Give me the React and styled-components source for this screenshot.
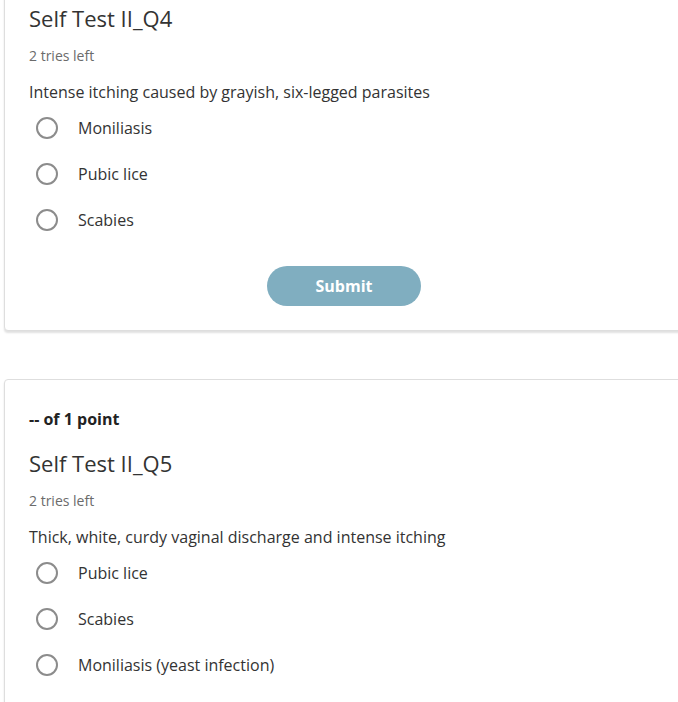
import styled, { createGlobalStyle } from "styled-components";

const GlobalStyle = createGlobalStyle`
  html, body {
    margin: 0;
    padding: 0;
    background: #ffffff;
    overflow: hidden;
  }
  body {
    font-family: "Open Sans", "Noto Sans", sans-serif;
    color: #333333;
  }
`;

const questions = [
  {
    id: 4,
    prompt: "Intense itching caused by grayish, six-legged parasites",
    options: ["Moniliasis", "Pubic lice", "Scabies"],
  },
  {
    id: 5,
    prompt: "Thick, white, curdy vaginal discharge and intense itching",
    options: ["Pubic lice", "Scabies", "Moniliasis (yeast infection)"],
  },
];

export default function App() {
  return (
    <>
      <GlobalStyle />
      <Page>
        {questions.map((q) => (
          <Card key={q.id}>
            <Points>-- of 1 point</Points>
            <Title>Self Test II_Q{q.id}</Title>
            <Tries>2 tries left</Tries>
            <Prompt>{q.prompt}</Prompt>
            <Options>
              {q.options.map((opt) => (
                <Option key={opt}>
                  <Radio type="radio" name={"q" + q.id} />
                  <span>{opt}</span>
                </Option>
              ))}
            </Options>
            <Actions>
              <SubmitButton type="button">Submit</SubmitButton>
            </Actions>
          </Card>
        ))}
      </Page>
    </>
  );
}

const Page = styled.div`
  display: flex;
  flex-direction: column;
  gap: 48px;
  margin-top: -66px;
  padding-left: 4px;
`;

const Card = styled.section`
  width: 680px;
  box-sizing: border-box;
  padding: 27px 24px 24px;
  background: #ffffff;
  border: 1px solid #dedede;
  border-radius: 4px;
  box-shadow: 0 2px 2px rgba(0, 0, 0, 0.12);
`;

const Points = styled.div`
  font-size: 16px;
  line-height: 24px;
  font-weight: 700;
  color: #222222;
`;

const Title = styled.h2`
  margin: 17px 0 0;
  font-size: 22px;
  line-height: 30px;
  font-weight: 400;
  color: #333333;
`;

const Tries = styled.div`
  margin-top: 13px;
  font-size: 14px;
  line-height: 20px;
  color: #6b6b6b;
`;

const Prompt = styled.p`
  margin: 14px 0 0;
  font-size: 16px;
  line-height: 24px;
  color: #333333;
`;

const Options = styled.div`
  display: flex;
  flex-direction: column;
  margin-top: 1px;
`;

const Option = styled.label`
  display: flex;
  align-items: center;
  gap: 20px;
  height: 46px;
  padding-left: 7px;
  font-size: 16px;
  color: #333333;
`;

const Radio = styled.input`
  appearance: none;
  margin: 0;
  width: 22px;
  height: 22px;
  box-sizing: border-box;
  border: 2px solid #8c8c8c;
  border-radius: 50%;
  background: #ffffff;
`;

const Actions = styled.div`
  display: flex;
  justify-content: center;
  margin-top: 23px;
`;

const SubmitButton = styled.button`
  width: 154px;
  height: 40px;
  border: none;
  border-radius: 20px;
  background: #80aec0;
  color: #ffffff;
  font-family: "Open Sans", "Noto Sans", sans-serif;
  font-size: 16px;
  font-weight: 700;
`;
